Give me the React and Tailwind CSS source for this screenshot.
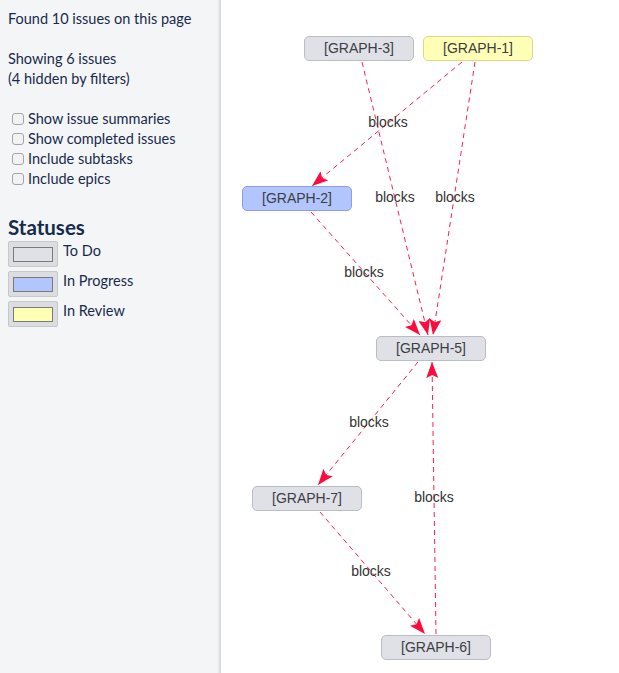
import React from 'react';

const SIDE_FONT = { fontFamily: 'Lato, "Noto Sans", sans-serif' };

const NODES = [
  { id: 'GRAPH-3', left: 83, top: 36, tone: 'todo' },
  { id: 'GRAPH-1', left: 202, top: 36, tone: 'review' },
  { id: 'GRAPH-2', left: 21, top: 186, tone: 'progress' },
  { id: 'GRAPH-5', left: 155, top: 336, tone: 'todo' },
  { id: 'GRAPH-7', left: 31, top: 486, tone: 'todo' },
  { id: 'GRAPH-6', left: 160, top: 635, tone: 'todo' },
];

const TONES = {
  todo: 'bg-[#dfe1e6] border-[#b9bdc6]',
  progress: 'bg-[#b3c5fd] border-[#8c9fe6]',
  review: 'bg-[#ffffb6] border-[#d8d88e]',
};

// page coordinates (the svg viewBox starts at x=221)
const EDGES = [
  { x1: 362, y1: 62, x2: 428, y2: 335, lx: 395, ly: 197 },
  { x1: 462, y1: 62, x2: 312, y2: 186, lx: 388, ly: 122 },
  { x1: 475, y1: 62, x2: 433, y2: 335, lx: 455, ly: 197 },
  { x1: 311, y1: 212, x2: 420, y2: 335, lx: 364, ly: 272 },
  { x1: 418, y1: 362, x2: 318, y2: 485, lx: 369, ly: 422 },
  { x1: 436, y1: 634, x2: 432, y2: 362, lx: 434, ly: 497 },
  { x1: 320, y1: 512, x2: 425, y2: 634, lx: 371, ly: 571 },
];

const FILTERS = [
  'Show issue summaries',
  'Show completed issues',
  'Include subtasks',
  'Include epics',
];

const STATUSES = [
  { label: 'To Do', inner: 'bg-[#dfe1e6]' },
  { label: 'In Progress', inner: 'bg-[#b3c5fd]' },
  { label: 'In Review', inner: 'bg-[#ffffb6]' },
];

function Sidebar() {
  return (
    <aside className="w-[218px] shrink-0 bg-[#f4f5f7] pl-2 pt-[9px] text-[14.5px] leading-5 text-[#172b4d]" style={SIDE_FONT}>
      <div>Found 10 issues on this page</div>
      <div className="mt-5">Showing 6 issues</div>
      <div>(4 hidden by filters)</div>

      <div className="mt-5 flex flex-col">
        {FILTERS.map((f) => (
          <label key={f} className="flex h-5 items-center">
            <input
              type="checkbox"
              className="m-[3px_4px_3px_4px] h-[12px] w-[12px] appearance-none rounded-[3px] border border-[#a3a5aa] bg-[#f2f2f3]"
            />
            <span>{f}</span>
          </label>
        ))}
      </div>

      <h2 className="mt-6 text-[20.5px] font-bold leading-[28px]">Statuses</h2>
      <div className="flex flex-col gap-1">
        {STATUSES.map((s) => (
          <div key={s.label} className="flex items-start">
            <div className="flex h-[26px] w-[50px] items-center justify-center rounded-[2px] border border-[#c6c8cc] bg-[#dcdde0]">
              <div className={'h-[15px] w-[40px] border border-[#7a7a7a] ' + s.inner} />
            </div>
            <span className="ml-[5px] leading-5">{s.label}</span>
          </div>
        ))}
      </div>
    </aside>
  );
}

function Graph() {
  return (
    <main className="relative flex-1 bg-white" style={{ fontFamily: '"Liberation Sans", Arial, sans-serif' }}>
      <svg className="absolute inset-0" width="398" height="673" viewBox="221 0 398 673">
        <defs>
          <marker id="arrow" viewBox="0 0 16 12" refX="16" refY="6" markerWidth="16" markerHeight="12" markerUnits="userSpaceOnUse" orient="auto">
            <path d="M0,0 L16,6 L0,12 L3,6 Z" fill="#ff0a3c" />
          </marker>
        </defs>
        {EDGES.map((e, i) => (
          <g key={i}>
            <line x1={e.x1} y1={e.y1} x2={e.x2} y2={e.y2} stroke="#ff1f4f" strokeWidth="1" strokeDasharray="5 4" markerEnd="url(#arrow)" />
            <text x={e.lx} y={e.ly} textAnchor="middle" dominantBaseline="central" fontSize="14" fill="#333">blocks</text>
          </g>
        ))}
      </svg>
      {NODES.map((n) => (
        <div
          key={n.id}
          className={'absolute flex h-[25px] w-[110px] items-center justify-center rounded-[5px] border text-[14px] text-[#3d3d44] ' + TONES[n.tone]}
          style={{ left: n.left, top: n.top }}
        >
          [{n.id}]
        </div>
      ))}
    </main>
  );
}

export default function App() {
  return (
    <div className="flex h-[673px] w-full overflow-hidden">
      <Sidebar />
      <div className="w-[3px] shrink-0 bg-gradient-to-r from-[#eceef2] to-[#d3d4df]" />
      <Graph />
    </div>
  );
}
